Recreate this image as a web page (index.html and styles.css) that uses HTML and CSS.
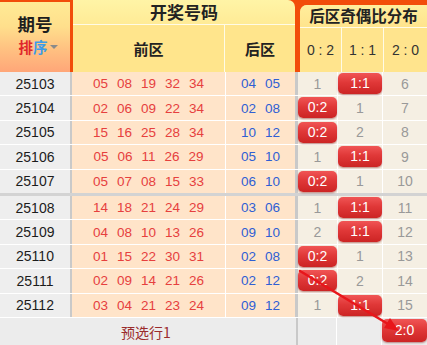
FILE: index.html
```html
<!DOCTYPE html>
<html lang="zh-CN">
<head>
<meta charset="utf-8">
<title>后区奇偶比分布</title>
<link rel="stylesheet" href="styles.css">
</head>
<body>
<div class="board">
  <div class="head">
    <div class="h-period">
      <div class="h-period-title">期号</div>
      <div class="h-sort"><span class="s-red">排</span><span class="s-blue">序</span><span class="caret"></span></div>
    </div>
    <div class="h-draw">
      <div class="h-draw-title">开奖号码</div>
      <div class="h-draw-sub">
        <div class="h-front">前区</div>
        <div class="h-back">后区</div>
      </div>
    </div>
    <div class="h-ratio">
      <div class="h-ratio-title">后区奇偶比分布</div>
      <div class="h-ratio-sub">
        <div class="hr c1">0 : 2</div>
        <div class="hr c2">1 : 1</div>
        <div class="hr c3">2 : 0</div>
      </div>
    </div>
  </div>

  <div class="body">
    <div class="row">
      <div class="c-period">25103</div>
      <div class="c-front"><span>05</span><span>08</span><span>19</span><span>32</span><span>34</span></div>
      <div class="c-back"><span>04</span><span>05</span></div>
      <div class="r r1">1</div><div class="r r2"><span class="badge">1:1</span></div><div class="r r3">6</div>
    </div>
    <div class="row">
      <div class="c-period">25104</div>
      <div class="c-front"><span>02</span><span>06</span><span>09</span><span>22</span><span>34</span></div>
      <div class="c-back"><span>02</span><span>08</span></div>
      <div class="r r1"><span class="badge">0:2</span></div><div class="r r2">1</div><div class="r r3">7</div>
    </div>
    <div class="row">
      <div class="c-period">25105</div>
      <div class="c-front"><span>15</span><span>16</span><span>25</span><span>28</span><span>34</span></div>
      <div class="c-back"><span>10</span><span>12</span></div>
      <div class="r r1"><span class="badge">0:2</span></div><div class="r r2">2</div><div class="r r3">8</div>
    </div>
    <div class="row">
      <div class="c-period">25106</div>
      <div class="c-front"><span>05</span><span>06</span><span>11</span><span>26</span><span>29</span></div>
      <div class="c-back"><span>05</span><span>10</span></div>
      <div class="r r1">1</div><div class="r r2"><span class="badge">1:1</span></div><div class="r r3">9</div>
    </div>
    <div class="row row-sep">
      <div class="c-period">25107</div>
      <div class="c-front"><span>05</span><span>07</span><span>08</span><span>15</span><span>33</span></div>
      <div class="c-back"><span>06</span><span>10</span></div>
      <div class="r r1"><span class="badge">0:2</span></div><div class="r r2">1</div><div class="r r3">10</div>
    </div>
    <div class="row">
      <div class="c-period">25108</div>
      <div class="c-front"><span>14</span><span>18</span><span>21</span><span>24</span><span>29</span></div>
      <div class="c-back"><span>03</span><span>06</span></div>
      <div class="r r1">1</div><div class="r r2"><span class="badge">1:1</span></div><div class="r r3">11</div>
    </div>
    <div class="row">
      <div class="c-period">25109</div>
      <div class="c-front"><span>04</span><span>08</span><span>10</span><span>13</span><span>26</span></div>
      <div class="c-back"><span>09</span><span>10</span></div>
      <div class="r r1">2</div><div class="r r2"><span class="badge">1:1</span></div><div class="r r3">12</div>
    </div>
    <div class="row">
      <div class="c-period">25110</div>
      <div class="c-front"><span>01</span><span>15</span><span>22</span><span>30</span><span>31</span></div>
      <div class="c-back"><span>02</span><span>08</span></div>
      <div class="r r1"><span class="badge">0:2</span></div><div class="r r2">1</div><div class="r r3">13</div>
    </div>
    <div class="row">
      <div class="c-period">25111</div>
      <div class="c-front"><span>02</span><span>09</span><span>14</span><span>21</span><span>26</span></div>
      <div class="c-back"><span>02</span><span>12</span></div>
      <div class="r r1"><span class="badge">0:2</span></div><div class="r r2">2</div><div class="r r3">14</div>
    </div>
    <div class="row">
      <div class="c-period">25112</div>
      <div class="c-front"><span>03</span><span>04</span><span>21</span><span>23</span><span>24</span></div>
      <div class="c-back"><span>09</span><span>12</span></div>
      <div class="r r1">1</div><div class="r r2"><span class="badge">1:1</span></div><div class="r r3">15</div>
    </div>
  </div>

  <div class="foot">
    <div class="f-label">预选行1</div>
    <div class="f r1"></div><div class="f r2"></div><div class="f r3"><span class="badge">2:0</span></div>
  </div>

  <svg class="arrow" width="427" height="345" viewBox="0 0 427 345">
    <line x1="300" y1="271" x2="388" y2="324" stroke="#e8161b" stroke-width="2.6" stroke-linecap="round"/>
    <polygon points="399,331 384,328 390,318" fill="#e8161b"/>
  </svg>
</div>
</body>
</html>
```

FILE: styles.css
```css
* { box-sizing: border-box; }
html, body { margin: 0; padding: 0; background: #ffffff; }
.board {
  position: relative;
  width: 427px;
  height: 345px;
  overflow: hidden;
  font-family: "Liberation Sans", Arial, "Noto Sans CJK SC", sans-serif;
}

/* header */
.head {
  display: flex;
  height: 72px;
  background: #f24d0a;
}
.h-period {
  width: 70px;
  height: 70px;
  margin-top: 2px;
  background: linear-gradient(#ffeb95 0%, #ffdf8c 35%, #ffc382 65%, #ffa678 100%);
  display: flex;
  flex-direction: column;
  align-items: center;
  padding-top: 12px;
  font-family: "Noto Sans CJK SC", sans-serif;
  font-weight: bold;
}
.h-period-title {
  font-size: 17.5px;
  line-height: 20px;
  color: #1e1e1e;
}
.h-sort {
  display: flex;
  align-items: center;
  font-size: 14.5px;
  line-height: 18px;
  margin-top: 4px;
  padding-left: 6px;
}
.s-red { color: #e0262b; }
.s-blue { color: #3d9ce8; }
.caret {
  width: 0;
  height: 0;
  margin-left: 2px;
  border-left: 4px solid transparent;
  border-right: 4px solid transparent;
  border-top: 4px solid #8a8a8a;
}
.h-draw {
  width: 222px;
  margin-left: 3px;
  height: 72px;
  border-top-right-radius: 7px;
  overflow: hidden;
  display: flex;
  flex-direction: column;
  font-family: "Noto Sans CJK SC", sans-serif;
  font-weight: bold;
  color: #222;
}
.h-draw-title {
  height: 25px;
  background: linear-gradient(#fff4a6, #ffeb96);
  border-bottom: 1px solid #fffbe6;
  text-align: center;
  font-size: 17px;
  line-height: 24px;
}
.h-draw-sub {
  flex: 1;
  display: flex;
  background: #ffe58c;
}
.h-front {
  width: 152px;
  border-right: 1px solid #fffbe6;
  display: flex;
  align-items: center;
  justify-content: center;
  font-size: 15px;
}
.h-back {
  flex: 1;
  display: flex;
  align-items: center;
  justify-content: center;
  font-size: 15px;
}
.h-ratio {
  width: 127px;
  margin-left: 5px;
  margin-top: 5px;
  height: 67px;
  border-top-left-radius: 7px;
  overflow: hidden;
  display: flex;
  flex-direction: column;
  background: #ffe48d;
}
.h-ratio-title {
  height: 23px;
  border-bottom: 1px solid #fffbe6;
  background: linear-gradient(#ffee9c, #ffe48d);
  font-family: "Noto Sans CJK SC", sans-serif;
  font-weight: bold;
  font-size: 15.5px;
  line-height: 20px;
  color: #222;
  text-align: center;
  white-space: nowrap;
}
.h-ratio-sub {
  flex: 1;
  display: flex;
}
.hr {
  display: flex;
  align-items: center;
  justify-content: center;
  font-size: 14px;
  color: #333;
}
.hr.c1 { width: 42px; border-right: 1px solid #fffbe6; }
.hr.c2 { width: 42px; border-right: 1px solid #fffbe6; }
.hr.c3 { flex: 1; }

/* body */
.row {
  display: flex;
  height: 24.4px;
  border-bottom: 1px solid #ffffff;
}
.row.row-sep {
  height: 26.4px;
  border-bottom: 3px solid #d3d3d3;
}
.c-period {
  width: 72px;
  background: #eeeeee;
  border-right: 2px solid #c9c9c9;
  display: flex;
  align-items: center;
  justify-content: center;
  font-size: 14px;
  color: #1c1c1c;
}
.c-front {
  width: 154px;
  background: #ffe4c9;
  border-right: 1px solid #ffffff;
  display: flex;
  align-items: center;
  justify-content: center;
  gap: 9px;
  font-size: 13.5px;
  color: #e6403e;
}
.c-back {
  width: 72px;
  background: #ffe4c9;
  border-right: 3px solid #c9c9c9;
  display: flex;
  align-items: center;
  justify-content: center;
  gap: 9px;
  font-size: 13.5px;
  color: #2f5fd4;
}
.r {
  position: relative;
  background: #f5efe3;
  display: flex;
  align-items: center;
  justify-content: center;
  font-size: 14px;
  color: #999999;
}
.r1 { width: 40px; border-right: 1px solid #ffffff; }
.r2 { width: 45px; border-right: 1px solid #ffffff; }
.r3 { flex: 1; }

.badge {
  position: absolute;
  left: 0;
  right: 0;
  top: 1px;
  height: 21px;
  border-radius: 5px;
  background: linear-gradient(#f05555 0%, #e03838 45%, #cc2424 100%);
  box-shadow: 0 1px 2px rgba(120, 0, 0, 0.45);
  color: #ffffff;
  font-size: 14px;
  line-height: 21px;
  text-align: center;
}

/* footer */
.foot {
  display: flex;
  height: 28px;
  background: #ececec;
}
.f-label {
  width: 298px;
  border-right: 2px solid #c9c9c9;
  display: flex;
  align-items: center;
  justify-content: center;
  font-family: "Noto Sans CJK SC", sans-serif;
  font-size: 14px;
  color: #9a2b2b;
  padding-right: 4px;
}
.f {
  position: relative;
  background: #ececec;
}
.f.r1 { width: 39px; border-right: 1px solid #ffffff; }
.f.r2 { width: 45px; border-right: 1px solid #ffffff; }
.f.r3 { flex: 1; }
.f .badge { top: 1px; height: 23px; line-height: 23px; }

.arrow {
  position: absolute;
  left: 0;
  top: 0;
  pointer-events: none;
}
```
